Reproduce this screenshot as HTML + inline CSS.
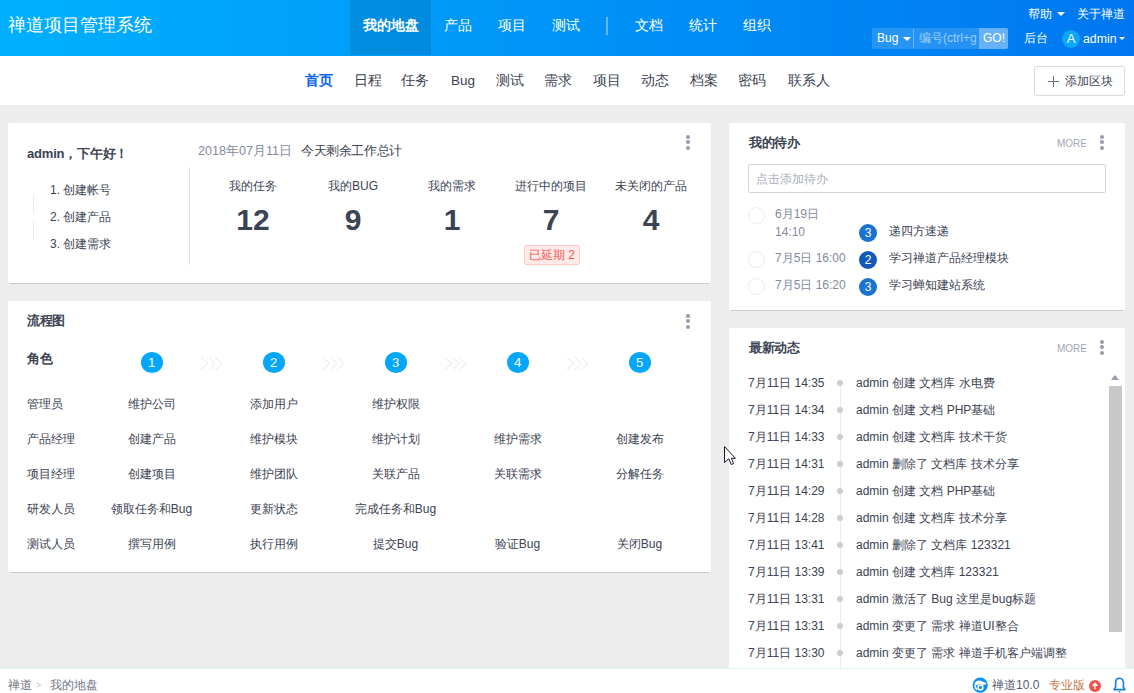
<!DOCTYPE html>
<html><head><meta charset="utf-8">
<style>
*{box-sizing:border-box;margin:0;padding:0}
html,body{width:1134px;height:693px;overflow:hidden}
body{background:#ededed;font-family:"Liberation Sans",sans-serif;font-size:13px;color:#3c4353;position:relative}
.a{position:absolute;white-space:nowrap;line-height:20px}
#hd{position:absolute;left:0;top:0;width:1134px;height:56px;background:linear-gradient(to right,#00b0ff 0%,#0077f0 100%)}
#hd .a{color:#fff}
#sub{position:absolute;left:0;top:56px;width:1134px;height:49px;background:#fff}
.pn{position:absolute;background:#fff;border-radius:2px}
.pn::after{content:"";position:absolute;left:2px;right:2px;bottom:-1px;height:1px;background:#cbcbcb}
.kb{position:absolute;width:4px}
.kb i{display:block;width:4px;height:4px;border-radius:50%;background:#979bac;margin-bottom:1.3px}
.b{font-weight:bold}
.g{color:#838a9d}
.num{font-size:30px;font-weight:bold;line-height:30px;font-family:"Liberation Sans",sans-serif;color:#3c4353}
.circ{position:absolute;width:22px;height:21px;border-radius:50%;background:#02a7fa;color:#fff;text-align:center;line-height:21px;font-size:13px}
.ck{position:absolute;width:17px;height:17px;border-radius:50%;border:1px solid #ebebeb}
.pri{position:absolute;width:18px;height:18px;border-radius:50%;color:#fff;font-size:12px;line-height:18px;text-align:center}
.dot{position:absolute;width:6px;height:6px;border-radius:50%;background:#cdcdcd}
#ft{position:absolute;left:0;top:668px;width:1134px;height:25px;background:#fff;border-top:1px solid #e3f3f8}
</style></head><body>

<div id="hd">
  <div class="a" style="left:8px;top:13px;font-size:18px;line-height:24px">禅道项目管理系统</div>
  <div style="position:absolute;left:350px;top:0;width:81px;height:55px;background:rgba(0,0,0,.1)"></div>
  <div class="a b" style="left:363px;top:16px;font-size:13.5px">我的地盘</div>
  <div class="a" style="left:444px;top:16px;font-size:13.5px">产品</div>
  <div class="a" style="left:498px;top:16px;font-size:13.5px">项目</div>
  <div class="a" style="left:552px;top:16px;font-size:13.5px">测试</div>
  <div style="position:absolute;left:606px;top:17px;width:2px;height:18px;background:rgba(255,255,255,.38)"></div>
  <div class="a" style="left:635px;top:16px;font-size:13.5px">文档</div>
  <div class="a" style="left:689px;top:16px;font-size:13.5px">统计</div>
  <div class="a" style="left:743px;top:16px;font-size:13.5px">组织</div>

  <div class="a" style="left:1028px;top:4px;font-size:12px">帮助</div>
  <div style="position:absolute;left:1057px;top:12px;border-left:4px solid transparent;border-right:4px solid transparent;border-top:4px solid #fff"></div>
  <div class="a" style="left:1077px;top:4px;font-size:12px">关于禅道</div>

  <div style="position:absolute;left:872px;top:28px;width:136px;height:21px;background:rgba(255,255,255,.15);border-radius:2px"></div>
  <div class="a" style="left:877px;top:28px;font-size:12px">Bug</div>
  <div style="position:absolute;left:903px;top:37px;border-left:4px solid transparent;border-right:4px solid transparent;border-top:4px solid #fff"></div>
  <div style="position:absolute;left:913px;top:29px;width:1px;height:19px;background:rgba(255,255,255,.3)"></div>
  <div class="a" style="left:919px;top:28px;font-size:12px;color:rgba(255,255,255,.55);width:59px;overflow:hidden">编号(ctrl+g</div>
  <div style="position:absolute;left:979px;top:28px;width:29px;height:21px;background:rgba(255,255,255,.3);border-radius:0 2px 2px 0"></div>
  <div class="a" style="left:983px;top:28px;font-size:12px">GO!</div>

  <div class="a" style="left:1024px;top:28px;font-size:12px">后台</div>
  <div style="position:absolute;left:1062px;top:30px;width:18px;height:18px;border-radius:50%;background:#0aa6f8;color:#fff;font-size:13px;line-height:18px;text-align:center">A</div>
  <div class="a" style="left:1083px;top:29px;font-size:12.3px">admin</div>
  <div style="position:absolute;left:1118.5px;top:37px;border-left:3.5px solid transparent;border-right:3.5px solid transparent;border-top:3.5px solid #fff"></div>
</div>

<div id="sub">
  <div class="a b" style="left:305px;top:15px;font-size:13.5px;color:#0a64f0">首页</div>
  <div class="a" style="left:354px;top:15px;font-size:13.5px">日程</div>
  <div class="a" style="left:401px;top:15px;font-size:13.5px">任务</div>
  <div class="a" style="left:451px;top:15px;font-size:13.5px">Bug</div>
  <div class="a" style="left:496px;top:15px;font-size:13.5px">测试</div>
  <div class="a" style="left:544px;top:15px;font-size:13.5px">需求</div>
  <div class="a" style="left:593px;top:15px;font-size:13.5px">项目</div>
  <div class="a" style="left:641px;top:15px;font-size:13.5px">动态</div>
  <div class="a" style="left:690px;top:15px;font-size:13.5px">档案</div>
  <div class="a" style="left:738px;top:15px;font-size:13.5px">密码</div>
  <div class="a" style="left:788px;top:15px;font-size:13.5px">联系人</div>
  <div style="position:absolute;left:1034px;top:10px;width:91px;height:30px;border:1px solid #d6dae2;border-radius:3px"></div>
  <div style="position:absolute;left:1048px;top:25px;width:11px;height:1px;background:#6b7080"></div><div style="position:absolute;left:1053px;top:20px;width:1px;height:11px;background:#6b7080"></div>
  <div class="a" style="left:1065px;top:15px;font-size:12px">添加区块</div>
</div>

<!-- panel 1 -->
<div class="pn" style="left:8px;top:123px;width:703px;height:160px">
  <div class="a b" style="left:19px;top:21px;font-size:13px;letter-spacing:-0.2px">admin，下午好！</div>
  <div class="a g" style="left:190px;top:18px;font-size:12.6px">2018年07月11日</div>
  <div class="a" style="left:293px;top:18px;font-size:13px;letter-spacing:-0.4px">今天剩余工作总计</div>
  <div style="position:absolute;left:181px;top:44px;width:1px;height:98px;background:#e5e5e5"></div>
  <div style="position:absolute;left:25px;top:71px;width:1px;height:20px;background:#ececec"></div><div style="position:absolute;left:25px;top:98px;width:1px;height:20px;background:#ececec"></div>
  <div class="a" style="left:42px;top:57px;font-size:12px">1. 创建帐号</div>
  <div class="a" style="left:42px;top:84px;font-size:12px">2. 创建产品</div>
  <div class="a" style="left:42px;top:111px;font-size:12px">3. 创建需求</div>
  <div class="a" style="left:195px;top:53px;width:100px;text-align:center;font-size:12px">我的任务</div>
  <div class="a num" style="left:195px;top:82px;width:100px;text-align:center">12</div>
  <div class="a" style="left:295px;top:53px;width:100px;text-align:center;font-size:12px">我的BUG</div>
  <div class="a num" style="left:295px;top:82px;width:100px;text-align:center">9</div>
  <div class="a" style="left:394px;top:53px;width:100px;text-align:center;font-size:12px">我的需求</div>
  <div class="a num" style="left:394px;top:82px;width:100px;text-align:center">1</div>
  <div class="a" style="left:493px;top:53px;width:100px;text-align:center;font-size:12px">进行中的项目</div>
  <div class="a num" style="left:493px;top:82px;width:100px;text-align:center">7</div>
  <div style="position:absolute;left:516px;top:122px;width:56px;height:20px;background:#ffe9e9;border:1px solid #ffcaca;border-radius:2px;color:#ef5f55;font-size:12px;line-height:18px;text-align:center">已延期 2</div>
  <div class="a" style="left:593px;top:53px;width:100px;text-align:center;font-size:12px">未关闭的产品</div>
  <div class="a num" style="left:593px;top:82px;width:100px;text-align:center">4</div>
  <div class="kb" style="left:678px;top:12px"><i></i><i></i><i></i></div>
</div>
<!-- panel 2 -->
<div class="pn" style="left:8px;top:301px;width:703px;height:271px">
  <div class="a b" style="left:19px;top:10px;letter-spacing:-0.5px">流程图</div>
  <div class="kb" style="left:678px;top:13px"><i></i><i></i><i></i></div>
  <div class="a b" style="left:19px;top:48px">角色</div>
  <div class="circ" style="left:132.5px;top:51px">1</div>
  <svg class="chev" style="position:absolute;left:192.0px;top:55px" width="24" height="15" viewBox="0 0 24 15"><path d="M1 1.5L8 7.5L1 13.5M9 1.5L15 7.5L9 13.5M15.5 1.5L22 7.5L15.5 13.5" fill="none" stroke="#e6e6e6" stroke-width="1"/></svg>
  <div class="circ" style="left:254.5px;top:51px">2</div>
  <svg class="chev" style="position:absolute;left:314.0px;top:55px" width="24" height="15" viewBox="0 0 24 15"><path d="M1 1.5L8 7.5L1 13.5M9 1.5L15 7.5L9 13.5M15.5 1.5L22 7.5L15.5 13.5" fill="none" stroke="#e6e6e6" stroke-width="1"/></svg>
  <div class="circ" style="left:376.5px;top:51px">3</div>
  <svg class="chev" style="position:absolute;left:436.0px;top:55px" width="24" height="15" viewBox="0 0 24 15"><path d="M1 1.5L8 7.5L1 13.5M9 1.5L15 7.5L9 13.5M15.5 1.5L22 7.5L15.5 13.5" fill="none" stroke="#e6e6e6" stroke-width="1"/></svg>
  <div class="circ" style="left:498.5px;top:51px">4</div>
  <svg class="chev" style="position:absolute;left:558.0px;top:55px" width="24" height="15" viewBox="0 0 24 15"><path d="M1 1.5L8 7.5L1 13.5M9 1.5L15 7.5L9 13.5M15.5 1.5L22 7.5L15.5 13.5" fill="none" stroke="#e6e6e6" stroke-width="1"/></svg>
  <div class="circ" style="left:620.5px;top:51px">5</div>
  <div class="a" style="left:19px;top:93px;font-size:12px">管理员</div>
  <div class="a" style="left:82.5px;top:93px;width:122px;text-align:center;font-size:12px">维护公司</div>
  <div class="a" style="left:204.5px;top:93px;width:122px;text-align:center;font-size:12px">添加用户</div>
  <div class="a" style="left:326.5px;top:93px;width:122px;text-align:center;font-size:12px">维护权限</div>
  <div class="a" style="left:19px;top:128px;font-size:12px">产品经理</div>
  <div class="a" style="left:82.5px;top:128px;width:122px;text-align:center;font-size:12px">创建产品</div>
  <div class="a" style="left:204.5px;top:128px;width:122px;text-align:center;font-size:12px">维护模块</div>
  <div class="a" style="left:326.5px;top:128px;width:122px;text-align:center;font-size:12px">维护计划</div>
  <div class="a" style="left:448.5px;top:128px;width:122px;text-align:center;font-size:12px">维护需求</div>
  <div class="a" style="left:570.5px;top:128px;width:122px;text-align:center;font-size:12px">创建发布</div>
  <div class="a" style="left:19px;top:163px;font-size:12px">项目经理</div>
  <div class="a" style="left:82.5px;top:163px;width:122px;text-align:center;font-size:12px">创建项目</div>
  <div class="a" style="left:204.5px;top:163px;width:122px;text-align:center;font-size:12px">维护团队</div>
  <div class="a" style="left:326.5px;top:163px;width:122px;text-align:center;font-size:12px">关联产品</div>
  <div class="a" style="left:448.5px;top:163px;width:122px;text-align:center;font-size:12px">关联需求</div>
  <div class="a" style="left:570.5px;top:163px;width:122px;text-align:center;font-size:12px">分解任务</div>
  <div class="a" style="left:19px;top:198px;font-size:12px">研发人员</div>
  <div class="a" style="left:82.5px;top:198px;width:122px;text-align:center;font-size:12px">领取任务和Bug</div>
  <div class="a" style="left:204.5px;top:198px;width:122px;text-align:center;font-size:12px">更新状态</div>
  <div class="a" style="left:326.5px;top:198px;width:122px;text-align:center;font-size:12px">完成任务和Bug</div>
  <div class="a" style="left:19px;top:233px;font-size:12px">测试人员</div>
  <div class="a" style="left:82.5px;top:233px;width:122px;text-align:center;font-size:12px">撰写用例</div>
  <div class="a" style="left:204.5px;top:233px;width:122px;text-align:center;font-size:12px">执行用例</div>
  <div class="a" style="left:326.5px;top:233px;width:122px;text-align:center;font-size:12px">提交Bug</div>
  <div class="a" style="left:448.5px;top:233px;width:122px;text-align:center;font-size:12px">验证Bug</div>
  <div class="a" style="left:570.5px;top:233px;width:122px;text-align:center;font-size:12px">关闭Bug</div>
</div>
<!-- right panel 1 -->
<div class="pn" style="left:729px;top:123px;width:396px;height:187px">
  <div class="a b" style="left:20px;top:10px;letter-spacing:-0.5px">我的待办</div>
  <div class="a" style="left:328px;top:11px;font-size:10px;color:#a3a7b5">MORE</div>
  <div class="kb" style="left:371px;top:12px"><i></i><i></i><i></i></div>
  <div style="position:absolute;left:19px;top:41px;width:358px;height:29px;border:1px solid #d4d4d4;border-radius:2px"></div>
  <div class="a" style="left:27px;top:46px;font-size:12px;color:#a9adb8">点击添加待办</div>
  <div class="ck" style="left:19px;top:84px"></div>
  <div class="a g" style="left:46px;top:81px;font-size:12px">6月19日</div>
  <div class="a g" style="left:46px;top:99px;font-size:12px">14:10</div>
  <div class="pri" style="left:130px;top:101px;background:#1a73d2">3</div>
  <div class="a" style="left:160px;top:98px;font-size:12px">递四方速递</div>
  <div class="ck" style="left:19px;top:128px"></div>
  <div class="a g" style="left:46px;top:125px;font-size:12px">7月5日 16:00</div>
  <div class="pri" style="left:130px;top:128px;background:#1359b8">2</div>
  <div class="a" style="left:160px;top:125px;font-size:12px">学习禅道产品经理模块</div>
  <div class="ck" style="left:19px;top:155px"></div>
  <div class="a g" style="left:46px;top:152px;font-size:12px">7月5日 16:20</div>
  <div class="pri" style="left:130px;top:155px;background:#1a73d2">3</div>
  <div class="a" style="left:160px;top:152px;font-size:12px">学习蝉知建站系统</div>
</div>
<!-- right panel 2 -->
<div class="pn" style="left:729px;top:328px;width:396px;height:345px">
  <div class="a b" style="left:20px;top:10px;letter-spacing:-0.5px">最新动态</div>
  <div class="a" style="left:328px;top:11px;font-size:10px;color:#a3a7b5">MORE</div>
  <div class="kb" style="left:371px;top:12px"><i></i><i></i><i></i></div>
  <div style="position:absolute;left:111px;top:56px;width:1px;height:300px;background:#eaeaea"></div>
  <div class="a" style="left:19px;top:45px;font-size:12px">7月11日 14:35</div>
  <div class="dot" style="left:108px;top:52px"></div>
  <div class="a" style="left:127px;top:45px;font-size:12px">admin 创建 文档库 水电费</div>
  <div class="a" style="left:19px;top:72px;font-size:12px">7月11日 14:34</div>
  <div class="dot" style="left:108px;top:79px"></div>
  <div class="a" style="left:127px;top:72px;font-size:12px">admin 创建 文档 PHP基础</div>
  <div class="a" style="left:19px;top:99px;font-size:12px">7月11日 14:33</div>
  <div class="dot" style="left:108px;top:106px"></div>
  <div class="a" style="left:127px;top:99px;font-size:12px">admin 创建 文档库 技术干货</div>
  <div class="a" style="left:19px;top:126px;font-size:12px">7月11日 14:31</div>
  <div class="dot" style="left:108px;top:133px"></div>
  <div class="a" style="left:127px;top:126px;font-size:12px">admin 删除了 文档库 技术分享</div>
  <div class="a" style="left:19px;top:153px;font-size:12px">7月11日 14:29</div>
  <div class="dot" style="left:108px;top:160px"></div>
  <div class="a" style="left:127px;top:153px;font-size:12px">admin 创建 文档 PHP基础</div>
  <div class="a" style="left:19px;top:180px;font-size:12px">7月11日 14:28</div>
  <div class="dot" style="left:108px;top:187px"></div>
  <div class="a" style="left:127px;top:180px;font-size:12px">admin 创建 文档库 技术分享</div>
  <div class="a" style="left:19px;top:207px;font-size:12px">7月11日 13:41</div>
  <div class="dot" style="left:108px;top:214px"></div>
  <div class="a" style="left:127px;top:207px;font-size:12px">admin 删除了 文档库 123321</div>
  <div class="a" style="left:19px;top:234px;font-size:12px">7月11日 13:39</div>
  <div class="dot" style="left:108px;top:241px"></div>
  <div class="a" style="left:127px;top:234px;font-size:12px">admin 创建 文档库 123321</div>
  <div class="a" style="left:19px;top:261px;font-size:12px">7月11日 13:31</div>
  <div class="dot" style="left:108px;top:268px"></div>
  <div class="a" style="left:127px;top:261px;font-size:12px">admin 激活了 Bug 这里是bug标题</div>
  <div class="a" style="left:19px;top:288px;font-size:12px">7月11日 13:31</div>
  <div class="dot" style="left:108px;top:295px"></div>
  <div class="a" style="left:127px;top:288px;font-size:12px">admin 变更了 需求 禅道UI整合</div>
  <div class="a" style="left:19px;top:315px;font-size:12px">7月11日 13:30</div>
  <div class="dot" style="left:108px;top:322px"></div>
  <div class="a" style="left:127px;top:315px;font-size:12px">admin 变更了 需求 禅道手机客户端调整</div>
  <div class="a" style="left:19px;top:342px;font-size:12px">7月11日 13:21</div>
  <div class="dot" style="left:108px;top:349px"></div>
  <div class="a" style="left:127px;top:342px;font-size:12px">admin 创建 文档库 水电费</div>
  
  <div style="position:absolute;left:380px;top:58px;width:13px;height:246px;background:#c8c8c8"></div>
  <div style="position:absolute;left:382px;top:47px;border-left:4.5px solid transparent;border-right:4.5px solid transparent;border-bottom:5px solid #9c9aae"></div>
</div>

<div id="ft">
  <div class="a" style="left:8px;top:8px;font-size:12px;line-height:16px;color:#6f7484">禅道</div>
  <div class="a" style="left:36px;top:8px;font-size:9px;line-height:16px;color:#c4c4c4">&gt;</div>
  <div class="a" style="left:50px;top:8px;font-size:12px;line-height:16px;color:#6f7484">我的地盘</div>
  <svg style="position:absolute;left:972px;top:8px" width="16" height="16" viewBox="0 0 16 16"><circle cx="8.2" cy="8.2" r="7.6" fill="#0b8ff2"/><path d="M2.6 6.6C3.6 3.8 7 2.8 10 4.2C11.6 5 13 6 14.6 5.8C13.8 7.8 11.8 8.6 9.8 7.6C8 6.8 5.8 7.2 4.8 8.6" fill="#fff"/><path d="M3.4 6.4C2.8 8.6 3.4 11.4 5.2 12.8" fill="none" stroke="#fff" stroke-width="1.4"/><circle cx="8.4" cy="10.4" r="2.4" fill="none" stroke="#fff" stroke-width="1.6"/></svg>
  <div class="a" style="left:992px;top:8px;font-size:12px;line-height:16px;color:#555b6c">禅道10.0</div>
  <div class="a" style="left:1049px;top:8px;font-size:12px;line-height:16px;color:#c7773f">专业版</div>
  <svg style="position:absolute;left:1089px;top:11px" width="12" height="12" viewBox="0 0 12 12"><circle cx="6" cy="6" r="6" fill="#f0524a"/><path d="M6 9.3V3.5M3.6 5.8L6 3.3L8.4 5.8" fill="none" stroke="#fff" stroke-width="1.5"/></svg>
  <svg style="position:absolute;left:1113px;top:8px" width="13" height="17" viewBox="0 0 13 17"><path d="M6.5 1.2C4 1.2 2.6 3.2 2.6 5.6V10.2L1 12.6H12L10.4 10.2V5.6C10.4 3.2 9 1.2 6.5 1.2Z" fill="none" stroke="#1a7ee8" stroke-width="1.6" stroke-linejoin="round"/><path d="M5 14.2H8L6.5 15.8Z" fill="#1a7ee8"/></svg>
</div>
<svg style="position:absolute;left:723px;top:445px;z-index:9" width="16" height="22" viewBox="0 0 16 22"><path d="M1.5 1.5V17.5L5.8 13.8L8.2 19.5L10.6 18.5L8.4 13.3H12.4Z" fill="#fff" stroke="#1a1a26" stroke-width="1" stroke-linejoin="miter"/></svg>
</body></html>
